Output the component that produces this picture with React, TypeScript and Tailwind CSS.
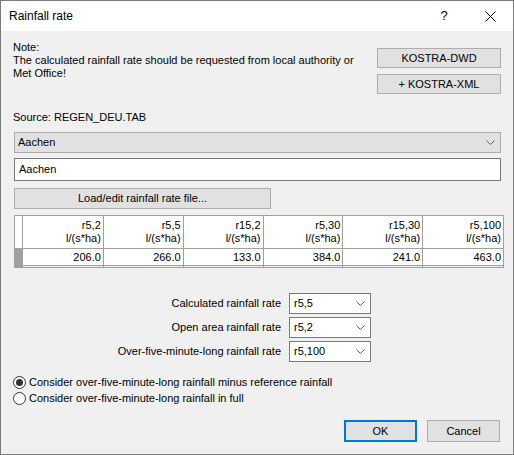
import React from 'react';

const font = { fontFamily: '"Liberation Sans", Arial, sans-serif' };

function Chevron() {
  return (
    <svg width="9" height="5" viewBox="0 0 9 5" className="shrink-0">
      <path d="M0.5 0.5 L4.5 4.5 L8.5 0.5" fill="none" stroke="#606060" strokeWidth="1" />
    </svg>
  );
}

function Button({ label, primary, className = '' }: { label: string; primary?: boolean; className?: string }) {
  return (
    <div
      className={`flex items-center justify-center bg-[#e1e1e1] text-[11px] text-black ${
        primary ? 'border-2 border-[#0078d7]' : 'border border-[#adadad]'
      } ${className}`}
    >
      {label}
    </div>
  );
}

function SmallCombo({ value }: { value: string }) {
  return (
    <div className="flex h-[21px] w-[82px] items-center justify-between border border-[#7a7a7a] bg-white pl-[4px] pr-[5px]">
      <span>{value}</span>
      <Chevron />
    </div>
  );
}

const columns = [
  { name: 'r5,2', value: '206.0', w: 'w-[81px]' },
  { name: 'r5,5', value: '266.0', w: 'w-[80px]' },
  { name: 'r15,2', value: '133.0', w: 'w-[80px]' },
  { name: 'r5,30', value: '384.0', w: 'w-[80px]' },
  { name: 'r15,30', value: '241.0', w: 'w-[80px]' },
  { name: 'r5,100', value: '463.0', w: 'w-[80px]' },
];

const rates = [
  { label: 'Calculated rainfall rate', value: 'r5,5' },
  { label: 'Open area rainfall rate', value: 'r5,2' },
  { label: 'Over-five-minute-long rainfall rate', value: 'r5,100' },
];

export default function App() {
  return (
    <div className="h-[455px] w-[514px] overflow-hidden border border-[#7a7a7a] bg-[#f0f0f0] text-black" style={font}>
      {/* title bar */}
      <div className="flex h-[30px] items-center bg-white pl-[8px] text-[12px]">
        <span className="flex-1">Rainfall rate</span>
        <span className="w-[46px] text-center text-[13px]">?</span>
        <span className="flex w-[46px] items-center justify-center">
          <svg width="11" height="11" viewBox="0 0 11 11">
            <path d="M0.5 0.5 L10.5 10.5 M10.5 0.5 L0.5 10.5" stroke="#000" strokeWidth="1" />
          </svg>
        </span>
      </div>

      <div className="flex flex-col px-[12px] text-[11px] leading-[13px]">
        {/* note + kostra buttons */}
        <div className="flex justify-between pt-[10px]">
          <div className="w-[345px]">
            <div>Note:</div>
            <div>The calculated rainfall rate should be requested from local authority or Met Office!</div>
          </div>
          <div className="mt-[7px] flex flex-col gap-[6px]">
            <Button label="KOSTRA-DWD" className="h-[20px] w-[124px]" />
            <Button label="+ KOSTRA-XML" className="h-[20px] w-[124px]" />
          </div>
        </div>

        <div className="mt-[17px]">Source: REGEN_DEU.TAB</div>

        {/* station combo */}
        <div className="ml-[1px] mt-[8px] flex h-[21px] items-center justify-between border border-[#adadad] bg-[#e1e1e1] pl-[3px] pr-[5px]">
          <span>Aachen</span>
          <Chevron />
        </div>

        <div className="ml-[1px] mt-[5px] flex h-[23px] items-center border border-[#7a7a7a] bg-white pl-[4px]">Aachen</div>

        <Button label="Load/edit rainfall rate file..." className="ml-[1px] mt-[7px] h-[21px] w-[257px]" />

        {/* grid */}
        <div className="ml-[1px] mt-[6px] flex h-[53px] w-[490px] border border-[#a0a0a0] bg-[#f0f0f0]">
          <div className="flex w-[8px] flex-col border-r border-[#a0a0a0]">
            <div className="h-[33px] border-b border-[#a0a0a0] bg-white" />
            <div className="h-[18px] bg-[#a0a0a0]" />
          </div>
          {columns.map((c, i) => (
            <div key={c.name} className={`flex flex-col ${c.w} ${i < columns.length - 1 ? 'border-r border-[#a0a0a0]' : ''}`}>
              <div className="flex h-[33px] flex-col items-end border-b border-[#a0a0a0] bg-white pr-[2px] pt-[3px] leading-[13px]">
                <span>{c.name}</span>
                <span>l/(s*ha)</span>
              </div>
              <div className="flex h-[17px] items-center justify-end border-b border-[#a0a0a0] bg-white pr-[2px]">{c.value}</div>
            </div>
          ))}
        </div>

        {/* rate selections */}
        <div className="mt-[25px] flex flex-col gap-[3px] pl-[1px]">
          {rates.map((r) => (
            <div key={r.label} className="flex items-center">
              <span className="w-[275px] pr-[8px] text-right">{r.label}</span>
              <SmallCombo value={r.value} />
            </div>
          ))}
        </div>

        {/* radios */}
        <div className="mt-[14px] flex flex-col gap-[3px]">
          <div className="flex items-center gap-[3px]">
            <span className="flex h-[13px] w-[13px] items-center justify-center rounded-full border border-[#333] bg-white">
              <span className="h-[7px] w-[7px] rounded-full bg-[#333]" />
            </span>
            <span>Consider over-five-minute-long rainfall minus reference rainfall</span>
          </div>
          <div className="flex items-center gap-[3px]">
            <span className="h-[13px] w-[13px] rounded-full border border-[#333] bg-white" />
            <span>Consider over-five-minute-long rainfall in full</span>
          </div>
        </div>

        {/* dialog buttons */}
        <div className="mt-[15px] flex justify-end gap-[10px] pr-[1px]">
          <Button label="OK" primary className="h-[22px] w-[73px]" />
          <Button label="Cancel" className="h-[22px] w-[73px]" />
        </div>
      </div>
    </div>
  );
}
